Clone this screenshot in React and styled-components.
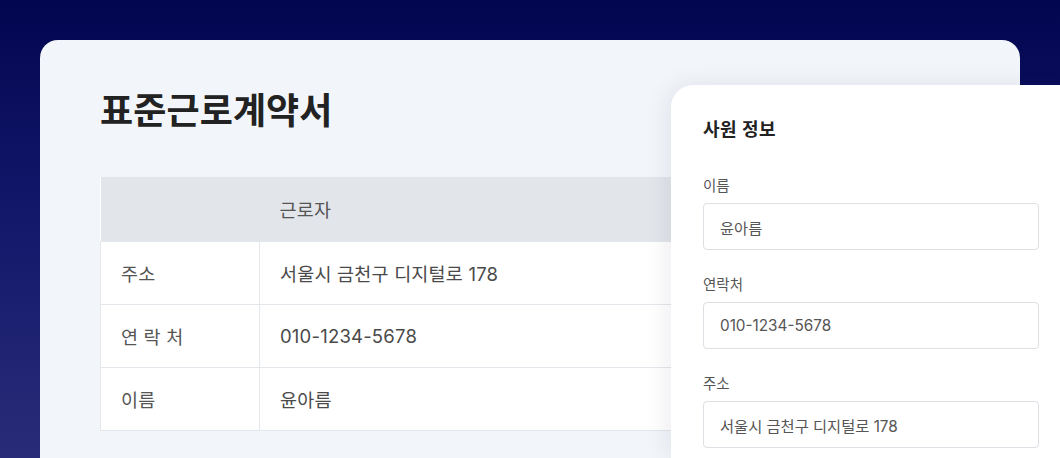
import React from "react";
import styled, { createGlobalStyle } from "styled-components";

const GlobalStyle = createGlobalStyle`
  html, body {
    margin: 0;
    padding: 0;
    height: 458px;
    overflow: hidden;
  }
  body {
    font-family: "Inter", "Noto Sans CJK KR", sans-serif;
    background: linear-gradient(180deg, #020650 0%, #13176a 45%, #282c78 100%);
  }
  * {
    box-sizing: border-box;
  }
`;

const Page = styled.div`
  position: relative;
  height: 458px;
  padding: 40px 40px 0;
`;

const Card = styled.div`
  width: 980px;
  height: 418px;
  background: #f2f5f9;
  border-radius: 18px 18px 0 0;
  padding: 46px 60px;
`;

const Title = styled.h1`
  margin: 0;
  font-size: 36px;
  line-height: 50px;
  font-weight: 700;
  letter-spacing: 0.1px;
  color: #222;
`;

const Table = styled.table`
  margin-top: 41px;
  width: 820px;
  border-collapse: collapse;
  background: #fff;
  font-size: 18.5px;
  letter-spacing: 0.2px;
  color: #555;
`;

const HeadCell = styled.th`
  height: 64px;
  background: #e2e5ea;
  text-align: left;
  font-weight: 400;
  padding: 0 20px;
  color: #555;
  width: ${(p) => (p.$label ? "159px" : "auto")};
`;

const Cell = styled.td`
  height: 63px;
  padding: 0 20px;
  border: 1px solid #e3e6ea;
  width: ${(p) => (p.$label ? "159px" : "auto")};
  color: ${(p) => (p.$label ? "#555" : "#4a4a4a")};
`;

const Panel = styled.aside`
  position: absolute;
  left: 671px;
  top: 85px;
  width: 400px;
  height: 373px;
  overflow: hidden;
  background: #fff;
  border-radius: 22px 0 0 0;
  padding: 32px 32px;
  box-shadow: -4px 0 24px rgba(20, 30, 60, 0.08);
`;

const PanelTitle = styled.h2`
  margin: 0 0 34px;
  font-size: 18px;
  line-height: 26px;
  font-weight: 700;
  letter-spacing: 0.5px;
  color: #222;
`;

const Field = styled.div`
  display: flex;
  flex-direction: column;
  gap: 8px;
  margin-bottom: 26px;
`;

const Label = styled.label`
  font-size: 14.5px;
  line-height: 18px;
  color: #555;
`;

const Input = styled.div`
  height: 47px;
  border: 1px solid #dcdfe3;
  border-radius: 4px;
  padding: 0 16px;
  display: flex;
  align-items: center;
  font-size: 15.3px;
  color: #555;
`;

const rows = [
  ["주소", "서울시 금천구 디지털로 178"],
  ["연 락 처", "010-1234-5678"],
  ["이름", "윤아름"],
];

const fields = [
  ["이름", "윤아름"],
  ["연락처", "010-1234-5678"],
  ["주소", "서울시 금천구 디지털로 178"],
];

export default function App() {
  return (
    <>
      <GlobalStyle />
      <Page>
        <Card>
          <Title>표준근로계약서</Title>
          <Table>
            <thead>
              <tr>
                <HeadCell $label />
                <HeadCell>근로자</HeadCell>
              </tr>
            </thead>
            <tbody>
              {rows.map(([k, v]) => (
                <tr key={k}>
                  <Cell $label>{k}</Cell>
                  <Cell>{v}</Cell>
                </tr>
              ))}
            </tbody>
          </Table>
        </Card>
        <Panel>
          <PanelTitle>사원 정보</PanelTitle>
          {fields.map(([k, v]) => (
            <Field key={k}>
              <Label>{k}</Label>
              <Input>{v}</Input>
            </Field>
          ))}
        </Panel>
      </Page>
    </>
  );
}
